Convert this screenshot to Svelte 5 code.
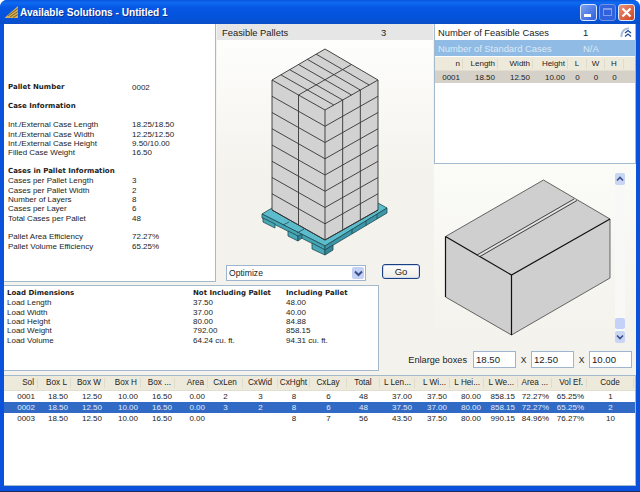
<script>
  const H = 16.25;
  const line = (a, b) => ({ x1: a[0], y1: a[1], x2: b[0], y2: b[1] });
  const mix = (a, b, t) => [a[0] + (b[0] - a[0]) * t, a[1] + (b[1] - a[1]) * t];

  // stack corners, in window coordinates (the svg viewBox matches)
  const B = [325, 49], L = [272, 80], R = [378, 80], F = [325, 110];
  const stackLines = [];
  for (let i = 1; i <= 8; i++) {
    stackLines.push(line([L[0], L[1] + H * i], [F[0], F[1] + H * i]));
    stackLines.push(line([F[0], F[1] + H * i], [R[0], R[1] + H * i]));
  }
  // verticals on the two faces
  for (const p of [mix(L, F, 0.5), mix(F, R, 1 / 3), mix(F, R, 2 / 3)]) {
    stackLines.push(line(p, [p[0], p[1] + H * 8]));
  }
  // top layer: middle seam, then case edges and tape lines across both halves
  const lm = mix(L, F, 0.5), bm = mix(B, R, 0.5);
  stackLines.push(line(lm, bm));
  for (let k = 1; k <= 5; k++) {
    const t = k / 6;
    stackLines.push(line(mix(L, B, t), mix(lm, bm, t)));
    stackLines.push(line(mix(lm, bm, t), mix(F, R, t)));
  }

  const info = [
    { a: 'Pallet Number', b: '0002', bold: true },
    {},
    { a: 'Case Information', bold: true },
    {},
    { a: 'Int./External Case Length', b: '18.25/18.50' },
    { a: 'Int./External Case Width', b: '12.25/12.50' },
    { a: 'Int./External Case Height', b: '9.50/10.00' },
    { a: 'Filled Case Weight', b: '16.50' },
    {},
    { a: 'Cases in Pallet Information', bold: true },
    { a: 'Cases per Pallet Length', b: '3' },
    { a: 'Cases per Pallet Width', b: '2' },
    { a: 'Number of Layers', b: '8' },
    { a: 'Cases per Layer', b: '6' },
    { a: 'Total Cases per Pallet', b: '48' },
    {},
    { a: 'Pallet Area Efficiency', b: '72.27%' },
    { a: 'Pallet Volume Efficiency', b: '65.25%' }
  ];

  const load = [
    ['Load Length', '37.50', '48.00'],
    ['Load Width', '37.00', '40.00'],
    ['Load Height', '80.00', '84.88'],
    ['Load Weight', '792.00', '858.15'],
    ['Load Volume', '64.24 cu. ft.', '94.31 cu. ft.']
  ];

  const caseHead = ['n', 'Length', 'Width', 'Height', 'L', 'W', 'H'];
  const caseRow = ['0001', '18.50', '12.50', '10.00', '0', '0', '0'];

  const head = ['Sol', 'Box L', 'Box W', 'Box H', 'Box ...', 'Area', 'CxLen', 'CxWid', 'CxHght', 'CxLay', 'Total', 'L Len...', 'L Wi...', 'L Hei...', 'L We...', 'Area ...', 'Vol Ef.', 'Code'];
  const align = ['r', 'r', 'r', 'r', 'r', 'r', 'c', 'c', 'c', 'c', 'c', 'r', 'r', 'r', 'r', 'r', 'r', 'c'];
  const rows = [
    ['0001', '18.50', '12.50', '10.00', '16.50', '0.00', '2', '3', '8', '6', '48', '37.00', '37.50', '80.00', '858.15', '72.27%', '65.25%', '1'],
    ['0002', '18.50', '12.50', '10.00', '16.50', '0.00', '3', '2', '8', '6', '48', '37.50', '37.00', '80.00', '858.15', '72.27%', '65.25%', '2'],
    ['0003', '18.50', '12.50', '10.00', '16.50', '0.00', '', '', '8', '7', '56', '43.50', '37.50', '80.00', '990.15', '84.96%', '76.27%', '10']
  ];
</script>

<div class="win">
  <div class="title">
    <svg class="logo" width="14" height="14" viewBox="0 0 14 14">
      <path d="M0 12.5 L13 1 L13 13 L0 13Z" fill="#d3ad58" />
      <path d="M3 11 L13 3.5 M5 12 L13 6.5 M8 12.5 L13 9.5" stroke="#7d6420" stroke-width="1" fill="none" />
    </svg>
    <span class="title-text">Available Solutions - Untitled 1</span>
    <div class="controls">
      <div class="ctl min"><i></i></div>
      <div class="ctl max"><i></i></div>
      <div class="ctl close">
        <svg width="15" height="15" viewBox="0 0 15 15"><path d="M3.5 3.5 L11.5 11.5 M11.5 3.5 L3.5 11.5" stroke="#fff" stroke-width="2.2" /></svg>
      </div>
    </div>
  </div>

  <div class="client">
    <div class="main">
      <div class="info panel">
        {#each info as r}
          <div class="info-row" class:bold={r.bold}><span>{r.a ?? ''}</span><span class="val">{r.b ?? ''}</span></div>
        {/each}
      </div>

      <div class="mid">
        <div class="mid-head"><span>Feasible Pallets</span><span class="mid-count">3</span></div>
        <svg class="pallet" width="216" height="222" viewBox="217 40 216 222">
          <!-- pallet -->
          <path d="M262 214 L272 208 L378 203 L387 208 L325 246 Z" fill="#5cbccb" stroke="#1f4a52" stroke-width=".8" />
          <path d="M262 214 L325 246 L325 250 L262 218 Z" fill="#46a5b5" stroke="#1f4a52" stroke-width=".8" />
          <path d="M325 246 L387 208 L387 213 L325 250 Z" fill="#3c97a8" stroke="#1f4a52" stroke-width=".8" />
          <path d="M263 218 L275 224 L275 228 L263 222 Z M288 231 L298 236 L298 241 L288 236 Z M312 243 L325 250 L325 255 L312 249 Z" fill="#4aa9b9" stroke="#1f4a52" stroke-width=".8" />
          <path d="M325 250 L333 245 L333 250 L325 255 Z M298 236 L302 234 L302 238 L298 241 Z" fill="#35879a" stroke="#1f4a52" stroke-width=".8" />
          <path d="M283 225 L289 222 M297 233 L304 229 M352 229 L352 234 M366 221 L366 226 M377 214 L377 219" stroke="#1f4a52" stroke-width=".8" />
          <!-- stack of cases -->
          <path d="M325 49 L378 80 L378 210 L325 240 L272 210 L272 80 Z" fill="#d2d2d2" />
          <g stroke="#333" stroke-width=".9">
            {#each stackLines as l}
              <line x1={l.x1} y1={l.y1} x2={l.x2} y2={l.y2} />
            {/each}
          </g>
          <path d="M325 49 L378 80 L378 210 L325 240 L272 210 L272 80 Z M272 80 L325 110 L378 80 M325 110 L325 240" fill="none" stroke="#333" stroke-width=".9" />
        </svg>
        <div class="go-row">
          <div class="select">
            <span>Optimize</span>
            <div class="arrow"><svg width="9" height="7" viewBox="0 0 9 7"><path d="M1 1.5 L4.5 5 L8 1.5" fill="none" stroke="#3a4f8a" stroke-width="2" /></svg></div>
          </div>
          <div class="go">Go</div>
        </div>
      </div>

      <div class="cases panel">
        <div class="feas">
          <span class="feas-label">Number of Feasible Cases</span>
          <span class="feas-val">1</span>
          <svg class="collapse" width="15" height="11" viewBox="0 0 15 11">
            <path d="M1.5 10 A6.5 7.5 0 0 1 9 1.5" fill="none" stroke="#a9bcd8" stroke-width="2" />
            <path d="M5 6 L8 3.5 L11 6 M5 9.5 L8 7 L11 9.5" fill="none" stroke="#1f4e9c" stroke-width="1.3" />
          </svg>
        </div>
        <div class="std"><span class="feas-label">Number of Standard Cases</span><span class="std-val">N/A</span></div>
        <div class="case-grid case-head">
          {#each caseHead as h}<span>{h}</span>{/each}
        </div>
        <div class="case-grid case-row">
          {#each caseRow as c}<span>{c}</span>{/each}
        </div>
      </div>

      <div class="box-view">
        <svg class="box" width="175" height="170" viewBox="440 175 175 170">
          <path d="M543.5 180 L610 219 L610 278 L511.5 335 L445.5 297 L445.5 236.5 Z" fill="#cfcfcf" />
          <path d="M543.5 180 L445.5 236.5 M543.5 180 L610 219 M445.5 297 L511.5 335 L610 278 L610 219" fill="none" stroke="#444" stroke-width=".8" />
          <path d="M445.5 236.5 L511.5 275 L610 219 M445.5 236.5 L445.5 297 M511.5 275 L511.5 335" fill="none" stroke="#111" stroke-width="1.2" />
          <path d="M477 255 L574 199 M480 256.5 L577 200.5" fill="none" stroke="#333" stroke-width=".9" />
          <path d="M478.5 255.7 L575.5 199.7" fill="none" stroke="#eee" stroke-width=".9" />
        </svg>
        <div class="scroll">
          <div class="sbtn"><svg width="8" height="6" viewBox="0 0 8 6"><path d="M1 4.5 L4 1.5 L7 4.5" fill="none" stroke="#3a4f8a" stroke-width="1.6" /></svg></div>
          <div class="track"><div class="thumb"></div></div>
          <div class="sbtn"><svg width="8" height="6" viewBox="0 0 8 6"><path d="M1 1.5 L4 4.5 L7 1.5" fill="none" stroke="#3a4f8a" stroke-width="1.6" /></svg></div>
        </div>
      </div>

      <div class="load panel">
        <div class="load-row bold"><span>Load Dimensions</span><span>Not Including Pallet</span><span>Including Pallet</span></div>
        {#each load as r}
          <div class="load-row"><span>{r[0]}</span><span>{r[1]}</span><span>{r[2]}</span></div>
        {/each}
      </div>

      <div class="enlarge">
        <span class="enl-label">Enlarge boxes</span>
        <div class="field">18.50</div>
        <span class="times">X</span>
        <div class="field">12.50</div>
        <span class="times">X</span>
        <div class="field">10.00</div>
      </div>
    </div>

    <div class="sol panel">
      <div class="sol-grid sol-head">
        {#each head as h, i}<span class={align[i]}>{h}</span>{/each}
      </div>
      {#each rows as row, n}
        <div class="sol-grid sol-row" class:sel={n === 1}>
          {#each row as c, i}<span class={align[i]}>{c}</span>{/each}
        </div>
      {/each}
    </div>
  </div>
</div>

<style>
  :global(body) { margin: 0; background: #fff; }
  .win {
    width: 640px;
    height: 492px;
    box-sizing: border-box;
    display: flex;
    flex-direction: column;
    overflow: hidden;
    padding: 0 4px 5px;
    background: #0a52dc;
    border-radius: 7px 7px 0 0;
    border-bottom: 1px solid #202a60;
    font-family: "Liberation Sans", sans-serif;
    color: #1c1c1c;
  }
  .title {
    height: 24px;
    flex: none;
    margin: 0 -4px;
    padding: 0 4px 0 5px;
    display: flex;
    align-items: center;
    background: linear-gradient(#0a55e0, #0f6cf2 12%, #0657e4 30%, #0453dd 70%, #0a4fc8);
  }
  .logo { margin-right: 1px; }
  .title-text {
    font: bold 10.1px "Liberation Sans", sans-serif;
    color: #fff;
    text-shadow: 1px 1px #0b2f8f;
  }
  .controls { margin-left: auto; display: flex; gap: 2px; margin-right: 1px; }
  .ctl {
    width: 15px;
    height: 15px;
    border: 1px solid #dfe8fb;
    border-radius: 3px;
    box-sizing: content-box;
    position: relative;
  }
  .min { background: linear-gradient(135deg, #7ba2f0, #2c5fdc); }
  .min i { position: absolute; left: 3px; bottom: 3px; width: 7px; height: 3px; background: #fff; }
  .max { background: #2f62dc; border-color: #6f93e6; }
  .max i { position: absolute; left: 3px; top: 3px; width: 9px; height: 8px; border: 1px solid #7f9de8; border-top-width: 2px; box-sizing: border-box; }
  .close { background: linear-gradient(135deg, #e8937a, #d0431f); }
  .close svg { display: block; }

  .client {
    flex: 1;
    background: #f3f2ec;
    display: flex;
    flex-direction: column;
    gap: 3px;
    min-height: 0;
  }
  .panel { background: #fff; border: 1px solid #a3bacd; box-sizing: border-box; }

  .main {
    display: grid;
    grid-template-columns: 212px 163px 54px 203px;
    grid-template-rows: 140px 120px 63px 25px;
  }
  .info {
    grid-column: 1;
    grid-row: 1 / 3;
    border-width: 0 1px 1px 0;
    padding: 59px 0 0 4px;
    margin-bottom: 2px;
    font-size: 8px;
  }
  .info-row {
    height: 9.33px;
    line-height: 9.33px;
    display: grid;
    grid-template-columns: 124px 1fr;
    white-space: nowrap;
  }
  .bold { font-family: "DejaVu Sans", sans-serif; font-weight: bold; font-size: 7px; }
  .val { font-family: "Liberation Sans", sans-serif; font-weight: normal; font-size: 8px; }

  .mid {
    grid-column: 2 / 4;
    grid-row: 1 / 3;
    display: flex;
    flex-direction: column;
    margin-left: 1px;
    background: linear-gradient(#fff, #f3f2ec 60%);
  }
  .mid-head {
    height: 16px;
    flex: none;
    background: #e6e6e6;
    display: grid;
    grid-template-columns: 159px 1fr;
    align-items: center;
    padding-left: 5px;
    font-size: 9.4px;
  }
  .pallet { display: block; flex: none; margin-bottom: 3px; }
  .go-row { display: flex; align-items: flex-start; padding-left: 9px; gap: 16px; }
  .select {
    width: 140px;
    height: 16px;
    box-sizing: border-box;
    border: 1px solid #9db5cf;
    background: #fff;
    display: flex;
    align-items: center;
    justify-content: space-between;
    padding: 0 1px 0 2px;
    font-size: 8.6px;
  }
  .arrow {
    width: 12px;
    height: 12px;
    background: #c3d2f4;
    border-radius: 2px;
    display: flex;
    align-items: center;
    justify-content: center;
  }
  .go {
    width: 38px;
    height: 15px;
    margin-top: -1px;
    box-sizing: border-box;
    border: 1px solid #1c3f7f;
    border-radius: 3px;
    background: linear-gradient(#fff, #ecebe3);
    box-shadow: inset 0 0 0 1px #cfdcf2;
    text-align: center;
    font-size: 9.5px;
    line-height: 13px;
  }

  .cases {
    grid-column: 4;
    grid-row: 1;
    margin-left: 1px;
    border-width: 0 1px 1px 1px;
    font-size: 8px;
  }
  .feas, .std {
    height: 16px;
    display: grid;
    grid-template-columns: 145px 36px 1fr;
    align-items: center;
    padding-left: 3px;
    font-size: 9.4px;
  }
  .std { background: #90bbe4; color: #dce9f6; }
  .collapse { margin-left: 1px; }
  .case-grid {
    display: grid;
    grid-template-columns: 28px 35px 35px 35px 19px 18px 19px;
    align-items: center;
    text-align: right;
  }
  .case-head { height: 14px; margin-top: 1px; background: #eeeadb; border-bottom: 1px solid #e2dfd0; box-sizing: border-box; }
  .case-head span { padding-right: 2px; border-right: 1px solid #e0dccb; line-height: 10px; }
  .case-head span:nth-child(n+5) { text-align: center; padding: 0; }
  .case-row { height: 12px; background: #d5d1c9; }
  .case-row span { padding-right: 3px; }
  .case-row span:nth-child(n+5) { text-align: center; padding: 0; }

  .box-view {
    grid-column: 4;
    grid-row: 2 / 4;
    display: flex;
    align-items: flex-start;
    padding: 9px 0 0 6px;
    background: linear-gradient(#fbfbf8, #f3f2ec);
    margin-left: 1px;
  }
  .box { display: block; flex: none; margin-top: 2px; }
  .scroll {
    width: 10px;
    height: 170px;
    flex: none;
    display: flex;
    flex-direction: column;
    background: #f8f8f6;
  }
  .sbtn {
    height: 12px;
    flex: none;
    background: #c8d6f4;
    border-radius: 2px;
    display: flex;
    align-items: center;
    justify-content: center;
  }
  .track { flex: 1; display: flex; align-items: flex-end; padding-bottom: 2px; }
  .thumb { width: 10px; height: 11px; background: #c3d2f6; border-radius: 2px; }

  .load {
    grid-column: 1 / 3;
    grid-row: 3 / 5;
    height: 86px;
    padding: 3px 0 0 3px;
    margin-top: 1px;
    border-left: 0;
    font-size: 8px;
  }
  .load-row {
    display: grid;
    grid-template-columns: 186px 93px 1fr;
    height: 9.33px;
    line-height: 9.33px;
    white-space: nowrap;
  }

  .enlarge {
    grid-column: 3 / 5;
    grid-row: 4;
    display: flex;
    align-items: center;
    justify-content: flex-end;
    padding-right: 4px;
    font-size: 9.6px;
  }
  .enl-label { margin-right: 6px; font-size: 9.2px; }
  .field {
    width: 43px;
    height: 17px;
    box-sizing: border-box;
    border: 1px solid #9db5cf;
    background: #fff;
    padding-left: 2px;
    line-height: 15px;
  }
  .times { width: 15px; text-align: center; font-size: 8.6px; }

  .sol {
    flex: 1;
    border-left: 0;
    font-size: 8px;
    min-height: 0;
  }
  .sol-grid {
    display: grid;
    grid-template-columns: 34px 33px 34px 36px 34px 33px 35px 35px 32px 37px 33px 35px 35px 34px 34px 34px 35px 47px;
    align-items: center;
  }
  .sol-head { height: 15px; background: #eeeadb; border-bottom: 1px solid #e2dfd0; box-sizing: border-box; font-size: 8.2px; }
  .sol-head span { border-right: 1px solid #e0dccb; line-height: 10px; }
  .sol-row { height: 11px; }
  .sol-grid span { white-space: nowrap; overflow: hidden; }
  .r { text-align: right; padding-right: 3px; }
  .c { text-align: center; }
  .sel { background: #316ac5; color: #e4ecf8; }
</style>
